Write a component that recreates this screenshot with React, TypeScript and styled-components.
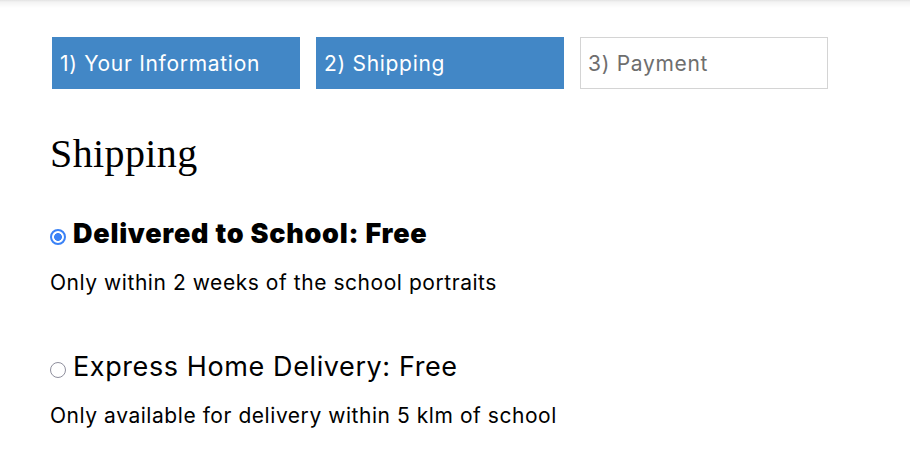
import React, { useState } from "react";
import styled, { createGlobalStyle } from "styled-components";

const Global = createGlobalStyle`
  html, body { margin: 0; padding: 0; background: #fff; }
  body { font-family: "Inter", "Open Sans", sans-serif; color: #000; }
`;

const TopShade = styled.div`
  height: 8px;
  background: linear-gradient(to bottom, #e2e2e2 0px, #f3f3f3 2px, #ffffff 8px);
`;

const Page = styled.main`
  padding: 29px 50px 0 50px;
`;

const Tabs = styled.nav`
  display: flex;
  gap: 16px;
  margin-left: 2px;
`;

const Tab = styled.div<{ $active: boolean }>`
  box-sizing: border-box;
  width: 248px;
  height: 52px;
  display: flex;
  align-items: center;
  padding-left: 7px;
  font-family: "Inter", sans-serif;
  font-size: 21px;
  font-weight: 400;
  letter-spacing: 0.7px;
  background: ${(p) => (p.$active ? "#4287c6" : "#fff")};
  color: ${(p) => (p.$active ? "#fff" : "#6e6e6e")};
  border: 1px solid ${(p) => (p.$active ? "#4287c6" : "#d4d4d4")};
`;

const Heading = styled.h2`
  margin: 41px 0 0 0;
  font-family: "Liberation Serif", "DejaVu Serif", serif;
  font-weight: 400;
  font-size: 40px;
  line-height: 48px;
  letter-spacing: 0.4px;
`;

const Option = styled.section<{ $first?: boolean }>`
  margin-top: ${(p) => (p.$first ? "38px" : "52px")};
`;

const OptionLabel = styled.label`
  display: flex;
  align-items: center;
  gap: 7px;
  cursor: pointer;
`;

const Radio = styled.input`
  appearance: none;
  -webkit-appearance: none;
  box-sizing: border-box;
  flex: none;
  width: 16px;
  height: 16px;
  margin: 5px 0 0 0;
  border-radius: 50%;
  border: 1.5px solid #8f8f9d;
  background: #fff;
  cursor: pointer;

  &:checked {
    border: 2px solid #3b82f6;
    background: radial-gradient(circle, #3b82f6 0 3.6px, #fff 4.2px);
  }
`;

const LabelText = styled.span<{ $bold?: boolean }>`
  font-family: "Inter", sans-serif;
  font-size: 27px;
  line-height: 36px;
  font-weight: ${(p) => (p.$bold ? 900 : 400)};
  letter-spacing: ${(p) => (p.$bold ? "0.75px" : "0.6px")};
`;

const Desc = styled.p`
  margin: 17px 0 0 0;
  font-family: "Inter", sans-serif;
  font-size: 21px;
  line-height: 28px;
  letter-spacing: 0.55px;
`;

export default function App() {
  const [choice, setChoice] = useState("school");
  return (
    <>
      <Global />
      <TopShade />
      <Page>
        <Tabs>
          <Tab $active>1) Your Information</Tab>
          <Tab $active>2) Shipping</Tab>
          <Tab $active={false}>3) Payment</Tab>
        </Tabs>
        <Heading>Shipping</Heading>
        <Option $first>
          <OptionLabel>
            <Radio
              type="radio"
              name="ship"
              checked={choice === "school"}
              onChange={() => setChoice("school")}
            />
            <LabelText $bold>Delivered to School: Free</LabelText>
          </OptionLabel>
          <Desc>Only within 2 weeks of the school portraits</Desc>
        </Option>
        <Option>
          <OptionLabel>
            <Radio
              type="radio"
              name="ship"
              checked={choice === "express"}
              onChange={() => setChoice("express")}
            />
            <LabelText>Express Home Delivery: Free</LabelText>
          </OptionLabel>
          <Desc>Only available for delivery within 5 klm of school</Desc>
        </Option>
      </Page>
    </>
  );
}
